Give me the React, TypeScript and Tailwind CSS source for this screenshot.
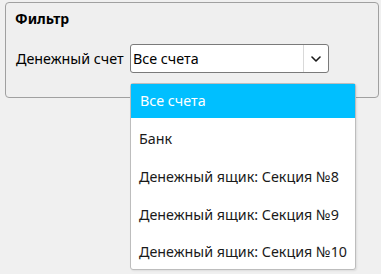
import React from "react";

const items = [
  "Все счета",
  "Банк",
  "Денежный ящик: Секция №8",
  "Денежный ящик: Секция №9",
  "Денежный ящик: Секция №10",
];

export default function App() {
  return (
    <div
      className="relative w-[381px] h-[274px] bg-[#f0f0f0] pt-[2px] pl-[5px] text-[#000]"
      style={{ fontFamily: '"Noto Sans", "Open Sans", sans-serif' }}
    >
      <div className="w-[374px] h-[96px] border border-[#a0a0a0] rounded-[4px] bg-[#efefef] flex flex-col">
        <div className="pl-[9px] pt-[6px] h-[20px] leading-[20px] text-[14px] font-bold">Фильтр</div>
        <div className="flex items-center mt-[21px] pl-[10px]">
          <span className="text-[14.3px] leading-[20px] w-[114px]">Денежный счет</span>
          <div className="flex w-[199px] h-[29px] border border-[#7a7a7a] rounded-[3px] bg-white">
            <div className="flex-1 pl-[2px] flex items-center text-[14.3px] leading-[20px]">Все счета</div>
            <div className="w-[25px] border-l border-[#d9d9d9] flex items-center justify-center">
              <svg width="10" height="6" viewBox="0 0 10 6" fill="none">
                <path d="M1 1 L5 5 L9 1" stroke="#1a1a1a" strokeWidth="1.6" strokeLinecap="round" strokeLinejoin="round" />
              </svg>
            </div>
          </div>
        </div>
      </div>
      <div className="absolute left-[130px] top-[83px] w-[226px] h-[187px] border border-[#bdbdbd] rounded-[3px] bg-white flex flex-col gap-[3.75px] shadow-[1px_1px_2px_rgba(0,0,0,0.08)]">
        {items.map((t, i) => (
          <div
            key={t}
            className={
              i === 0
                ? "h-[34px] shrink-0 flex items-center pl-[9px] text-[14.3px] bg-[#00bfff] text-white"
                : "h-[34px] shrink-0 flex items-center pl-[8px] text-[14.3px] text-[#1a1a1a]"
            }
          >
            {t}
          </div>
        ))}
      </div>
    </div>
  );
}
